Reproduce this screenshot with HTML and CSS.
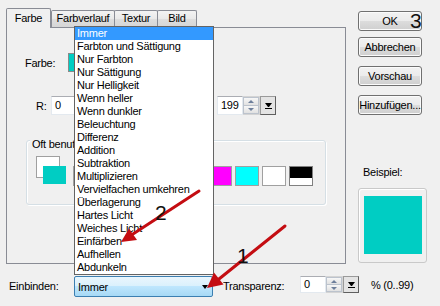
FILE: index.html
```html
<!DOCTYPE html>
<html lang="de">
<head>
    <meta charset="UTF-8">
    <title>Füllung</title>
    <link rel="stylesheet" href="styles.css">
</head>
<body>

<div class="dialog">
    <div class="top">
        <div class="tabsarea">
            <div class="tabs">
                <div class="tab active">Farbe</div>
                <div class="tab t-verlauf">Farbverlauf</div>
                <div class="tab t-textur">Textur</div>
                <div class="tab t-bild">Bild</div>
            </div>
            <div class="panel">
                <div class="farbe-row">
                    <span class="farbe-lbl">Farbe:</span>
                    <div class="farbe-swatch"></div>
                </div>
                <div class="rgb-row">
                    <span class="rgb-lbl">R:</span>
                    <div class="spin"><div class="field">0</div><div class="updown"><i class="up"></i><i class="down"></i></div><div class="drop"><i></i></div></div>
                    <span class="rgb-lbl"></span>
                    <div class="spin"><div class="field"></div><div class="updown"><i class="up"></i><i class="down"></i></div><div class="drop"><i></i></div></div>
                    <span class="rgb-lbl"></span>
                    <div class="spin"><div class="field">199</div><div class="updown"><i class="up"></i><i class="down"></i></div><div class="drop"><i></i></div></div>
                </div>
                <div class="group">
                    <div class="group-title">Oft benutzt</div>
                    <div class="group-body">
                        <div class="fgbg">
                            <div class="bg-sq"></div>
                            <div class="fg-sq"></div>
                        </div>
                        <div class="swatches">
                            <div class="sw" style="background:#ff0000"></div>
                            <div class="sw" style="background:#ffff00"></div>
                            <div class="sw" style="background:#00ff00"></div>
                            <div class="sw" style="background:#0000ff"></div>
                            <div class="sw" style="background:#808080"></div>
                            <div class="sw" style="background:#ff00ff"></div>
                            <div class="sw" style="background:#00ffff"></div>
                            <div class="sw" style="background:#ffffff"></div>
                            <div class="sw sw-bw"></div>
                        </div>
                    </div>
                </div>
            </div>
        </div>
        <div class="side">
            <div class="btn btn-ok">OK</div>
            <div class="btn btn-abbr">Abbrechen</div>
            <div class="btn">Vorschau</div>
            <div class="btn">Hinzufügen...</div>
            <div class="beispiel">Beispiel:</div>
            <div class="preview"><div class="preview-fill"></div></div>
        </div>
    </div>

    <div class="bottom">
        <span class="einb-lbl">Einbinden:</span>
        <div class="combo">Immer<i class="caret"></i></div>
        <span class="transp-lbl">Transparenz:</span>
        <div class="spin spin-small"><div class="field">0</div><div class="updown"><i class="up"></i><i class="down"></i></div><div class="drop"><i></i></div></div>
        <span class="percent">% (0..99)</span>
    </div>

    <ul class="droplist">
        <li class="sel">Immer</li>
        <li>Farbton und Sättigung</li>
        <li>Nur Farbton</li>
        <li>Nur Sättigung</li>
        <li>Nur Helligkeit</li>
        <li>Wenn heller</li>
        <li>Wenn dunkler</li>
        <li>Beleuchtung</li>
        <li>Differenz</li>
        <li>Addition</li>
        <li>Subtraktion</li>
        <li>Multiplizieren</li>
        <li>Vervielfachen umkehren</li>
        <li>Überlagerung</li>
        <li>Hartes Licht</li>
        <li>Weiches Licht</li>
        <li>Einfärben</li>
        <li>Aufhellen</li>
        <li>Abdunkeln</li>
    </ul>

    <svg class="marks" width="440" height="306" viewBox="0 0 440 306">
        <line x1="199" y1="191" x2="133" y2="234" class="arrow-line"/>
        <polygon points="121,242 137,240 129,228.5" class="arrow-head"/>
        <line x1="285" y1="226" x2="219" y2="279" class="arrow-line"/>
        <polygon points="207,288 223.5,284.5 214,272.5" class="arrow-head"/>
        <text x="237" y="263" class="num">1</text>
        <text x="155" y="220" class="num">2</text>
        <text x="410" y="28" class="num">3</text>
    </svg>
</div>

</body>
</html>
```

FILE: styles.css
```css
*{
    margin: 0;
    padding: 0;
    box-sizing: border-box;
}
body{
    width: 440px;
    height: 306px;
    overflow: hidden;
    background: #f0f0f0;
    font-family: "Liberation Sans", Arial, sans-serif;
    font-size: 11px;
    letter-spacing: -0.25px;
    color: #000;
}
.dialog{
    position: relative;
    width: 440px;
    height: 306px;
    padding: 8px 0 0 6px;
}
.top{
    display: flex;
}
.tabsarea{
    width: 340px;
}

/* tabs */
.tabs{
    display: flex;
    align-items: flex-end;
    height: 19px;
}
.tab{
    height: 17px;
    line-height: 15px;
    text-align: center;
    border: 1px solid #898c95;
    border-bottom: none;
    border-radius: 2px 2px 0 0;
    background: linear-gradient(#f3f3f3, #e9e9e9 50%, #dedede 50%, #d6d6d6);
}
.tab.active{
    position: relative;
    z-index: 2;
    width: 45px;
    height: 20px;
    margin-bottom: -1px;
    line-height: 18px;
    background: #f0f0f0;
}
.t-verlauf{
    width: 64px;
}
.t-textur{
    width: 44px;
    margin-left: -1px;
}
.t-bild{
    width: 40px;
    margin-left: -1px;
}
.panel{
    height: 237px;
    border: 1px solid #898c95;
    background: #f0f0f0;
    padding-top: 25px;
}

/* farbe */
.farbe-row{
    display: flex;
    align-items: center;
    height: 19px;
    padding-left: 18px;
}
.farbe-lbl{
    width: 43px;
}
.farbe-swatch{
    width: 40px;
    height: 19px;
    background: #00cdc3;
    border: 1px solid #8a8a8a;
}
.rgb-row{
    display: flex;
    align-items: center;
    margin-top: 24px;
    padding-left: 29px;
}
.rgb-lbl{
    width: 15px;
}
.rgb-row .spin{
    margin-right: 9px;
}

/* spin box */
.spin{
    display: flex;
    height: 19px;
}
.field{
    width: 26px;
    background: #fff;
    border: 1px solid #e3e9ef;
    border-top-color: #abadb3;
    padding-left: 3px;
    line-height: 17px;
}
.updown{
    width: 17px;
    display: flex;
    flex-direction: column;
    border: 1px solid #d4d4d4;
    border-left: none;
}
.updown i{
    flex: 1;
    display: flex;
    align-items: center;
    justify-content: center;
    background: linear-gradient(#f7f7f7, #e1e1e1);
    border: 1px solid #bcc3cd;
}
.updown i.down{
    border-top: none;
}
.updown i.up::before{
    content: "";
    border-left: 3px solid transparent;
    border-right: 3px solid transparent;
    border-bottom: 3px solid #6d7f9b;
}
.updown i.down::before{
    content: "";
    border-left: 3px solid transparent;
    border-right: 3px solid transparent;
    border-top: 3px solid #6d7f9b;
}
.drop{
    width: 16px;
    display: flex;
    flex-direction: column;
    align-items: center;
    justify-content: center;
    border: 1px solid #5f5f5f;
    border-top-color: #9a9a9a;
    border-left-color: #9a9a9a;
    background: #e4e4e4;
}
.drop i{
    width: 7px;
    height: 6px;
    border-bottom: 1px solid #000;
}
.drop i::before{
    content: "";
    display: block;
    border-left: 3.5px solid transparent;
    border-right: 3.5px solid transparent;
    border-top: 4px solid #000;
}
.spin-small{
    height: 17px;
}
.spin-small .field{
    line-height: 15px;
}

/* group */
.group{
    width: 300px;
    height: 65px;
    margin: 25px 0 0 19px;
    border: 1px solid #d5dfe5;
    border-radius: 3px;
    box-shadow: inset 1px 1px 0 #fff, 1px 1px 0 #fff;
}
.group-title{
    width: max-content;
    margin: -3px 0 0 3px;
    padding: 0 2px;
    line-height: 13px;
    background: #f0f0f0;
}
.group-body{
    display: flex;
    margin-top: 5px;
    padding-left: 9px;
}
.fgbg{
    display: grid;
    width: 30px;
    height: 28px;
}
.bg-sq, .fg-sq{
    grid-area: 1 / 1;
}
.bg-sq{
    width: 24px;
    height: 22px;
    background: #fff;
    border: 1px solid #a0a0a0;
}
.fg-sq{
    width: 23px;
    height: 18px;
    margin: 10px 0 0 7px;
    background: #00cdc3;
}
.swatches{
    display: flex;
    gap: 3px;
    margin: 10px 0 0 7px;
}
.sw{
    width: 24px;
    height: 20px;
    border: 1px solid #a0a0a0;
}
.sw-bw{
    background: linear-gradient(#000 60%, #fff 60%);
    border-color: #808080;
}

/* right column */
.side{
    width: 71px;
    margin-left: 12px;
    display: flex;
    flex-direction: column;
}
.btn{
    width: 64px;
    height: 20px;
    margin-top: 9px;
    border: 1px solid #707070;
    border-radius: 3px;
    background: linear-gradient(#f2f2f2, #ebebeb 50%, #dddddd 50%, #cfcfcf);
    box-shadow: inset 0 0 0 1px #fbfbfb;
    text-align: center;
    line-height: 18px;
    white-space: nowrap;
}
.btn-ok{
    margin-top: 3px;
}
.btn-abbr{
    margin-top: 6px;
}
.beispiel{
    margin-top: 51px;
    padding-left: 5px;
    line-height: 13px;
}
.preview{
    width: 69px;
    height: 75px;
    margin-top: 9px;
    padding: 7px 5px;
    border: 1px solid #c9c9c9;
    border-radius: 3px;
    box-shadow: inset 1px 1px 0 #fff;
}
.preview-fill{
    width: 58px;
    height: 58px;
    background: #00cdc3;
}

/* bottom row */
.bottom{
    display: flex;
    align-items: flex-start;
    margin-top: 12px;
    padding-left: 3px;
}
.einb-lbl{
    width: 65px;
    line-height: 21px;
}
.combo{
    width: 139px;
    height: 21px;
    display: flex;
    align-items: center;
    justify-content: space-between;
    padding: 0 4px 0 3px;
    border: 1px solid #3c7fb1;
    border-radius: 2px;
    background: linear-gradient(#eaf6fd, #d9f0fc 50%, #bee6fd 50%, #a7d9f5);
}
.caret{
    border-left: 3.5px solid transparent;
    border-right: 3.5px solid transparent;
    border-top: 4px solid #000;
}
.transp-lbl{
    width: 77px;
    margin-left: 10px;
    line-height: 21px;
}
.percent{
    margin-left: 12px;
    line-height: 19px;
}

/* open dropdown */
.droplist{
    position: absolute;
    left: 74px;
    top: 26px;
    width: 140px;
    z-index: 5;
    list-style: none;
    background: #fff;
    border: 1px solid #646464;
}
.droplist li{
    height: 13px;
    line-height: 13px;
    padding-left: 2px;
    white-space: nowrap;
}
.droplist li.sel{
    background: #3399ff;
    color: #fff;
}

/* annotations */
.marks{
    position: absolute;
    left: 0;
    top: 0;
    z-index: 10;
    pointer-events: none;
}
.arrow-line{
    stroke: #c40d12;
    stroke-width: 3;
    stroke-linecap: round;
}
.arrow-head{
    fill: #c40d12;
}
.num{
    font-family: "Liberation Sans", Arial, sans-serif;
    font-size: 21px;
    letter-spacing: 0;
    fill: #111;
}
```
